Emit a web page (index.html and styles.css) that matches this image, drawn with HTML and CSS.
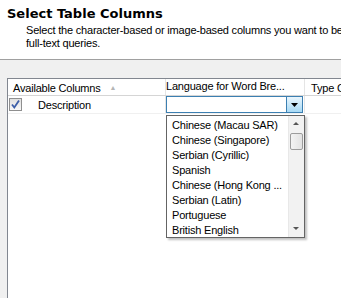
FILE: index.html
```html
<!DOCTYPE html>
<html lang="en">
<head>
    <meta charset="UTF-8">
    <title>Select Table Columns</title>
    <link rel="stylesheet" href="styles.css">
</head>
<body>
    <div class="intro">
        <h1>Select Table Columns</h1>
        <p>Select the character-based or image-based columns you want to be eligible for<br>full-text queries.</p>
    </div>

    <div class="panel">
        <div class="grid">
            <div class="row head">
                <div class="cell first">Available Columns <span class="sort">&#9650;</span></div>
                <div class="cell second">Language for Word Bre...</div>
                <div class="cell third">Type C</div>
            </div>
            <div class="row">
                <div class="cell first">
                    <span class="check">
                        <svg width="11" height="11" viewBox="0 0 11 11"><path d="M2 5.5 L4.3 8.5 L9 1.5" fill="none" stroke="#3c5ea8" stroke-width="1.8"/></svg>
                    </span>
                    <span class="name">Description</span>
                </div>
                <div class="cell second">
                    <div class="combo">
                        <span class="combo-btn">
                            <svg width="7" height="4" viewBox="0 0 7 4"><path d="M0 0 H7 L3.5 4 Z" fill="#000"/></svg>
                        </span>
                    </div>
                </div>
                <div class="cell third"></div>
            </div>

            <div class="dropdown">
                <ul>
                    <li>Chinese (Macau SAR)</li>
                    <li>Chinese (Singapore)</li>
                    <li>Serbian (Cyrillic)</li>
                    <li>Spanish</li>
                    <li>Chinese (Hong Kong ...</li>
                    <li>Serbian (Latin)</li>
                    <li>Portuguese</li>
                    <li>British English</li>
                </ul>
                <div class="scroll">
                    <span class="arrow up"></span>
                    <span class="thumb"></span>
                    <span class="fill"></span>
                    <span class="arrow down"></span>
                </div>
            </div>
        </div>
    </div>
</body>
</html>
```

FILE: styles.css
```css
body {
    margin: 0;
    font-family: "Liberation Sans", Arial, sans-serif;
    font-size: 11px;
    letter-spacing: -0.2px;
    color: #000;
    background-color: #fff;
    overflow: hidden;
    height: 298px;
}

.intro {
    height: 60px;
    border-bottom: 1px solid #a0a0a0;
    box-sizing: border-box;
    padding: 6px 0 0 7px;
}

.intro h1 {
    margin: 0;
    font-family: "DejaVu Sans", sans-serif;
    font-size: 13px;
    font-weight: bold;
    letter-spacing: 0;
    line-height: 16px;
}

.intro p {
    margin: 2px 0 0 19px;
    width: 340px;
    white-space: nowrap;
    line-height: 13px;
}

.intro p br + * {
    margin-left: -1px;
}

.panel {
    background-color: #f0f0f0;
    padding: 18px 0 0 7px;
    height: 238px;
}

.grid {
    position: relative;
    width: 420px;
    height: 260px;
    background-color: #fff;
    border-left: 1px solid #828790;
    border-top: 1px solid #828790;
}

.row {
    display: flex;
    height: 17px;
    border-bottom: 1px solid #f0f0f0;
}

.row.head {
    height: 16px;
    border-bottom: 1px solid #d5d5d5;
}

.cell {
    display: flex;
    align-items: center;
    box-sizing: border-box;
    border-right: 1px solid #e5e5e5;
    white-space: nowrap;
    overflow: hidden;
}

.first {
    width: 158px;
    padding-left: 5px;
}

.second {
    width: 139px;
    padding-left: 6px;
}

.third {
    flex: 1;
    padding-left: 6px;
    border-right: none;
}

.head .cell {
    padding-top: 1px;
}

.sort {
    color: #b5b5b5;
    font-size: 7px;
    margin-left: 9px;
}

.row .first .check {
    width: 11px;
    height: 11px;
    border: 1px solid #8f8f8f;
    background: linear-gradient(#e0e0e0, #f8f8f8);
    margin-left: -4px;
    display: flex;
    align-items: center;
    justify-content: center;
}

.name {
    margin-left: 16px;
}

.row .second {
    padding-left: 0;
    align-items: stretch;
}

.combo {
    flex: 1;
    position: relative;
    border: 1px solid #3c7fb1;
    background-color: #fff;
    margin-right: 1px;
    box-sizing: border-box;
    height: 17px;
}

.combo-btn {
    position: absolute;
    right: 0;
    top: 0;
    bottom: 0;
    width: 15px;
    border-left: 1px solid #3c7fb1;
    background: linear-gradient(#eaf6fd, #a7d9f5);
    display: flex;
    align-items: center;
    justify-content: center;
}

.dropdown {
    position: absolute;
    left: 158px;
    top: 36px;
    width: 139px;
    height: 123px;
    box-sizing: border-box;
    border: 1px solid #646464;
    background-color: #fff;
    box-shadow: 2px 2px 2px rgba(0, 0, 0, 0.25);
    display: flex;
}

.dropdown ul {
    list-style: none;
    margin: 0;
    padding: 2px 0 0 5px;
    flex: 1;
    overflow: hidden;
}

.dropdown li {
    height: 15px;
    line-height: 15px;
    white-space: nowrap;
}

.scroll {
    width: 15px;
    display: flex;
    flex-direction: column;
    background-color: #f2f2f2;
    border-left: 1px solid #e8e8e8;
}

.arrow {
    height: 17px;
    position: relative;
}

.arrow::after {
    content: "";
    position: absolute;
    left: 4px;
    border-left: 3px solid transparent;
    border-right: 3px solid transparent;
}

.arrow.up::after {
    top: 6px;
    border-bottom: 3px solid #555;
}

.arrow.down::after {
    top: 7px;
    border-top: 3px solid #555;
}

.thumb {
    height: 15px;
    margin: 0 1px;
    border: 1px solid #9c9c9c;
    border-radius: 2px;
    background: linear-gradient(to right, #f3f3f3, #e2e2e2);
}

.fill {
    flex: 1;
}
```
